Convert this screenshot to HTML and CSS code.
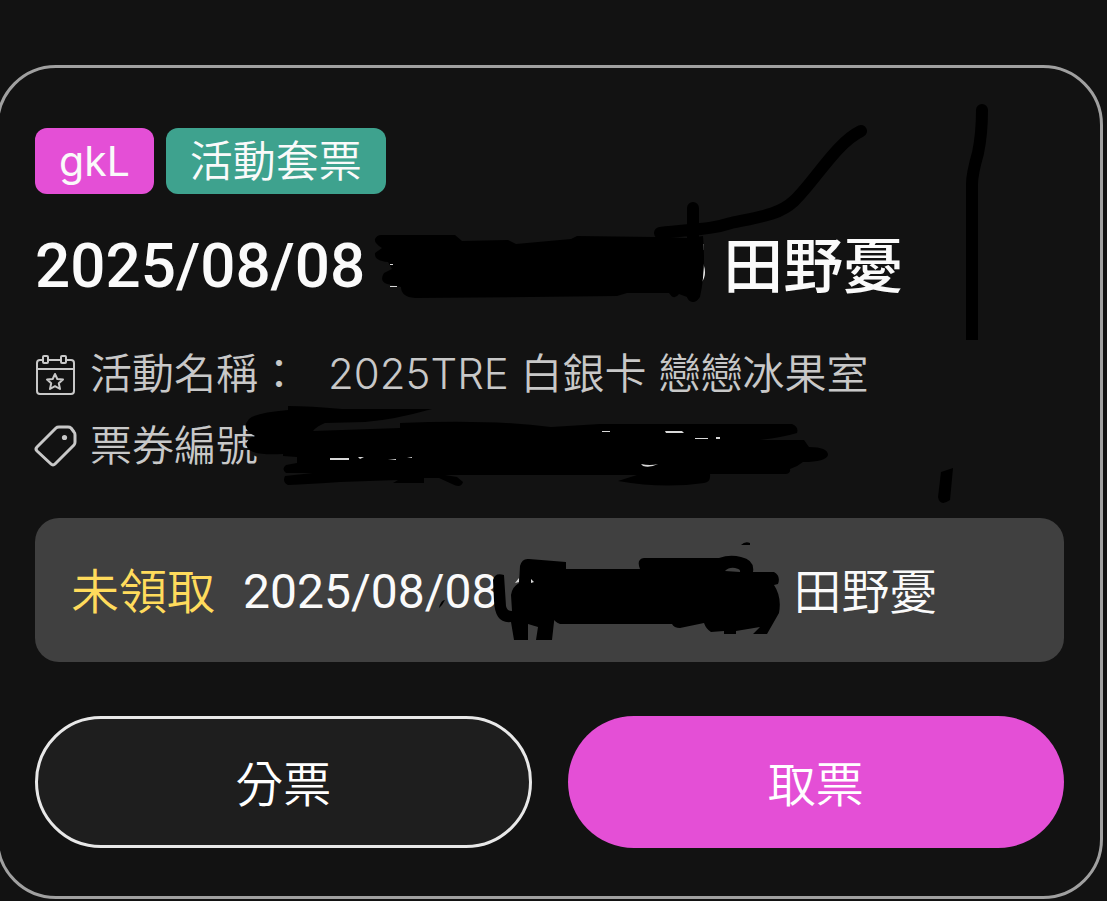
FILE: index.html
```
<!DOCTYPE html>
<html lang="zh-Hant">
<head>
    <meta charset="UTF-8">
    <meta name="viewport" content="width=device-width, initial-scale=1.0">
    <title>活動套票</title>
    <link rel="stylesheet" href="styles.css">
</head>
<body>
    <main class="page">
        <article class="card">
            <div class="tags">
                <span class="tag tag-pink">gkL</span>
                <span class="tag tag-green">活動套票</span>
            </div>

            <h1 class="title">
                <span class="title-date">2025/08/08</span>
                <span class="title-hidden">5</span>
                <span>田野憂</span>
            </h1>

            <dl class="info">
                <div class="info-row">
                    <svg class="icon" viewBox="0 0 42 42" aria-hidden="true">
                        <g fill="none" stroke="currentColor" stroke-width="2">
                            <path d="M8 7H5Q2 7 2 10V38Q2 41 5 41H36Q39 41 39 38V10Q39 7 36 7H32M13 7H26M2 16H39"/>
                            <rect x="8" y="3" width="5" height="7" rx="1"/>
                            <rect x="26" y="3" width="5" height="7" rx="1"/>
                            <path d="M20 21L22.300 26L28 26.600L23.800 30.300L25 36L20 33.200L15 36L16.200 30.300L12 26.600L17.700 26Z" stroke-linejoin="round"/>
                        </g>
                    </svg>
                    <dt>活動名稱：</dt>
                    <dd>2025TRE 白銀卡 戀戀冰果室</dd>
                </div>
                <div class="info-row">
                    <svg class="icon" viewBox="0 0 42 42" aria-hidden="true">
                        <path d="M2 22L21 3Q22 2 24 2H33Q35 2 36 3L39 7Q40 8 40 10V17Q40 19 39 20L20 39Q18 41 16 39L2 26Q0 24 2 22Z" fill="none" stroke="currentColor" stroke-width="3" stroke-linejoin="round"/>
                        <circle cx="29.500" cy="12.500" r="2.600" fill="currentColor"/>
                    </svg>
                    <dt>票券編號</dt>
                </div>
            </dl>

            <div class="ticket">
                <span class="ticket-status">未領取</span>
                <span class="ticket-date">2025/08/08</span>
                <span class="ticket-name">田野憂</span>
            </div>

            <div class="actions">
                <button type="button" class="btn btn-outline">分票</button>
                <button type="button" class="btn btn-primary">取票</button>
            </div>
        </article>

        <!-- marker strokes over the private details -->
        <svg class="marker" viewBox="0 0 1107 901" aria-hidden="true">
            <!-- title -->
            <path d="M381 235H455L462 241L508 240L516 244L571 239L577 236L655 237L688 238L703 236Q706 270 700 297Q693 306 687 297L679 294Q674 301 669 293L627 293L617 296L530 297L415 298Q401 297 401 287L387 284Q379 281 384 273L392 269L388 262Q374 261 375 253L382 248Q374 243 375 239Q377 235 381 235Z"/>
            <path class="stroke" d="M693 208V296M660 233C694 229 709 230 731 223C759 217 779 215 794 201C815 181 836 143 861 131M982 110Q982 134 978 153Q972 174 972 184V334"/>
            <path d="M966 326H978V340H966Z"/>
            <!-- ticket number -->
            <path d="M249 419Q255 413 288 410V406Q310 406 342 409L432 409Q393 420 365 422L325 423Q317 426 313 431L400 428V423Q490 419 551 427L600 424H792Q799 427 797 433Q780 438 760 440H804L809 447Q828 447 828 455Q826 462 803 462Q797 467 790 469Q791 474 785 474H710Q711 482 704 483Q663 489 618 481L637 475H445L457 477L463 482Q461 489 452 484L439 478H424V483H393L398 480L340 482Q310 484 288 485Q282 482 285 476L313 473L286 473Q281 469 286 465L297 463V457L283 456V454Q251 456 247 447Q245 439 255 436Q240 429 249 419Z"/>
            <path d="M941 472L953 468L950 500Q940 507 938 497Z"/>
            <!-- pick-up row -->
            <path d="M520 566Q522 558 529 559L566 562V569H640Q636 559 644 558L719 558Q730 554 741 557Q755 560 753 572H774Q781 576 778 584L774 585Q782 597 779 613L767 634H753L760 627L736 631V634H724V631L711 632Q706 629 704 623L680 628Q674 628 672 624H560Q551 621 555 613L552 640H536L538 627L528 624V640H514L511 622Q495 624 494 601L493 580Q495 572 504 575L506 606Q507 611 512 611L511 595Q512 587 519 583Z"/>
            <path d="M439 608Q441 600 445 600L442 605ZM741 545Q745 541 750 543V545Z"/>
            <!-- bits of text the marker missed -->
            <g class="missed">
                <path d="M390 286H397V287H390ZM390 264H393V265H390ZM330 458H349V460H330ZM358 457L364 457L360 459ZM388 460L396 459L396 460ZM407 458L412 457L412 458ZM602 431H610V432H602ZM665 431L682 431L684 433H666ZM695 438H708V439H695ZM716 437H720V439H716ZM641 464Q650 466 658 464Q650 468 643 466ZM531 579L534 582L531 583ZM515 583L519 578L519 582Z"/>
            </g>
            <path class="gap" d="M725 571Q729 567 735 568Q741 569 740 572Z"/>
        </svg>
    </main>
</body>
</html>
```
FILE: styles.css
```
* {
    box-sizing: border-box;
}
body {
    margin: 0;
    background-color: #121212;
    color: #fafafa;
    font-family: Inter, "Noto Sans CJK TC", sans-serif;
    overflow-x: hidden;
}
.page {
    position: relative;
    display: flow-root;
}
.card {
    margin: 65px 4px 2px -4px;
    padding: 60px 36px 48px;
    border: 3px solid #a0a0a0;
    border-radius: 60px;
}
.tags {
    display: flex;
    gap: 12px;
}
.tag {
    height: 66px;
    padding: 0 24px;
    border-radius: 12px;
    line-height: 66px;
}
.tag-pink {
    background-color: #e44fd6;
    font-size: 41px;
}
.tag-green {
    background-color: #3ea28e;
    font-size: 43px;
    font-weight: 350;
}
.title {
    display: flex;
    margin: 36px 0;
    font-size: 60px;
    font-weight: 500;
    line-height: 72px;
    white-space: nowrap;
}
.title-date {
    font-family: Roboto, sans-serif;
    font-size: 62px;
}
.title-hidden {
    flex: 1;
    max-width: 358px;
    padding-right: 16px;
    font-family: Roboto, sans-serif;
    text-align: right;
}
.info {
    margin: 0 0 36px;
    color: #c8c8c8;
    font-size: 42px;
    font-weight: 350;
    line-height: 72px;
    white-space: nowrap;
}
.info-row {
    display: flex;
    align-items: center;
}
.icon {
    width: 42px;
    height: 42px;
    margin-right: 13px;
    overflow: visible;
}
.info dd {
    margin: 0 0 0 28px;
}
.ticket {
    display: flex;
    align-items: center;
    height: 144px;
    padding: 3px 36px 0;
    border-radius: 24px;
    background-color: #404040;
    font-size: 48px;
    font-weight: 350;
    line-height: 72px;
    white-space: nowrap;
}
.ticket-status {
    margin-right: 28px;
    color: #ffdb5c;
}
.ticket-date {
    font-family: Roboto, sans-serif;
    font-weight: 400;
}
.ticket-name {
    margin-left: 295px;
}
.actions {
    display: grid;
    grid-template-columns: 1fr 1fr;
    gap: 36px;
    margin-top: 54px;
}
.btn {
    height: 132px;
    padding: 0 0 2px;
    border: none;
    border-radius: 66px;
    color: #fff;
    font-family: inherit;
    font-size: 48px;
    font-weight: 350;
    cursor: pointer;
}
.btn-outline {
    border: 3px solid #e8e8e8;
    background-color: #1e1e1e;
}
.btn-primary {
    background-color: #e44fd6;
}
.marker {
    position: absolute;
    top: 0;
    left: 0;
    width: 100%;
    fill: #000;
    pointer-events: none;
}
.marker .stroke {
    fill: none;
    stroke: #000;
    stroke-width: 12;
    stroke-linecap: round;
}
.marker .missed {
    fill: #d8d8d8;
}
.marker .gap {
    fill: #404040;
}
```
